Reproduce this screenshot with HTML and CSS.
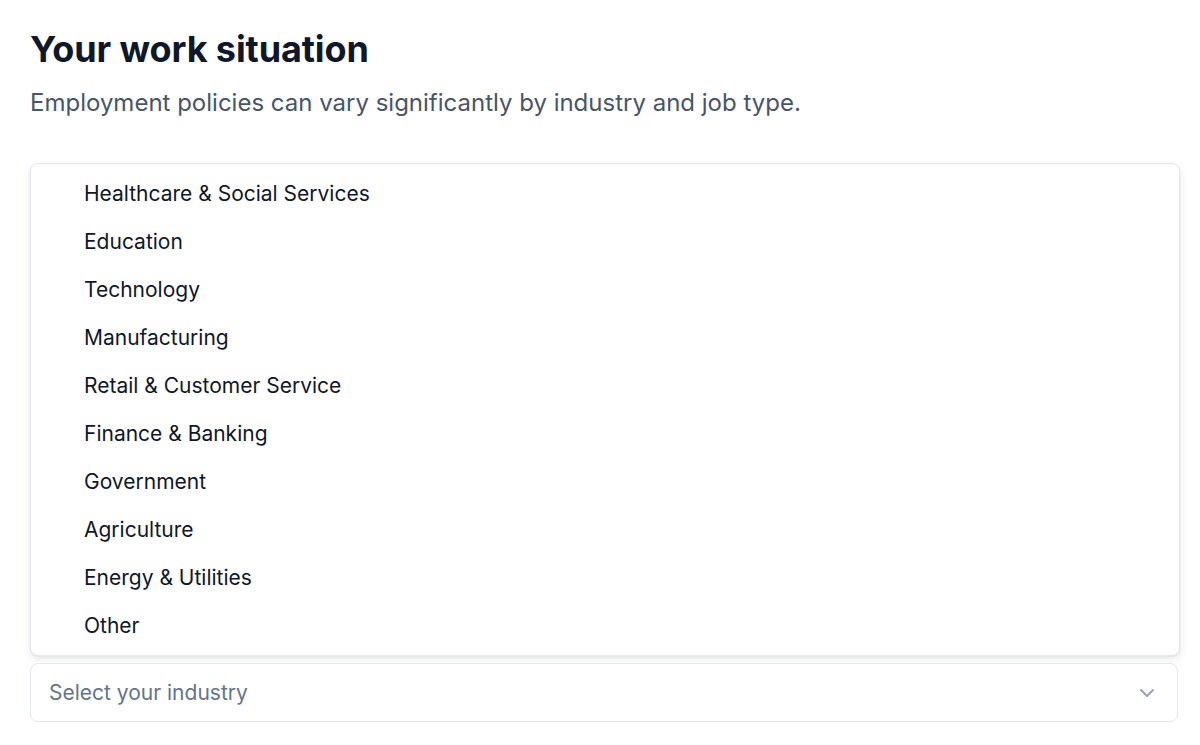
FILE: index.html
```html
<!DOCTYPE html>
<html lang="en">
<head>
<meta charset="utf-8">
<title>Your work situation</title>
<link rel="stylesheet" href="styles.css">
</head>
<body>
<main class="page">
  <h1 class="title">Your work situation</h1>
  <p class="subtitle">Employment policies can vary significantly by industry and job type.</p>
  <div class="field">
    <ul class="menu">
      <li class="option">Healthcare &amp; Social Services</li>
      <li class="option">Education</li>
      <li class="option">Technology</li>
      <li class="option">Manufacturing</li>
      <li class="option">Retail &amp; Customer Service</li>
      <li class="option">Finance &amp; Banking</li>
      <li class="option">Government</li>
      <li class="option">Agriculture</li>
      <li class="option">Energy &amp; Utilities</li>
      <li class="option">Other</li>
    </ul>
    <button class="select" type="button">
      <span class="placeholder">Select your industry</span>
      <svg class="chevron" width="24" height="24" viewBox="0 0 24 24" fill="none" stroke="currentColor" stroke-width="2" stroke-linecap="round" stroke-linejoin="round"><path d="m6 9 6 6 6-6"/></svg>
    </button>
  </div>
</main>
</body>
</html>
```

FILE: styles.css
```css
* { box-sizing: border-box; }
html, body { margin: 0; padding: 0; background: #ffffff; }
body { font-family: Inter, "Noto Sans", sans-serif; color: #0f172a; }
.page { padding: 24px 20px 0 30px; }
.title {
  margin: 0;
  font-size: 36px;
  line-height: 50px;
  font-weight: 700;
  color: #0f172a;
  letter-spacing: -0.1px;
}
.subtitle {
  margin: 12px 0 0;
  font-size: 24px;
  line-height: 34px;
  color: #475569;
}
.field { margin-top: 43px; display: flex; flex-direction: column; gap: 7px; }
.menu {
  list-style: none;
  margin: 0;
  padding: 5px 0 6px;
  border: 1px solid #e2e8f0;
  border-radius: 8px;
  background: #fff;
  box-shadow: 0 4px 10px rgba(15, 23, 42, 0.08), 0 1px 3px rgba(15, 23, 42, 0.06);
}
.option {
  height: 48px;
  display: flex;
  align-items: center;
  padding-left: 53px;
  font-size: 21px;
  color: #0f172a;
}
.select {
  width: 1148px;
  height: 59px;
  display: flex;
  align-items: center;
  justify-content: space-between;
  padding: 0 18px 0 18px;
  border: 1px solid #e2e8f0;
  border-radius: 8px;
  background: #fff;
  font-family: inherit;
  cursor: pointer;
}
.placeholder { font-size: 21px; color: #64748b; }
.chevron { color: #94a3b8; }
```
